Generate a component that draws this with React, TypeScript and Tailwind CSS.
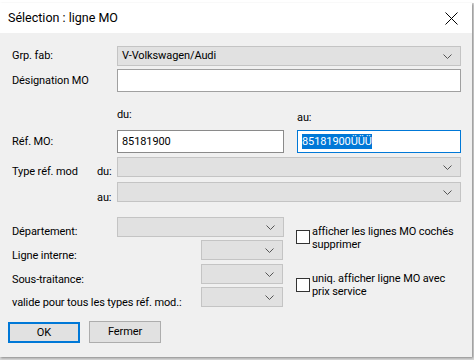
import React from "react";

const font = { fontFamily: 'Roboto, "Liberation Sans", sans-serif' };

function Chevron() {
  return (
    <svg width="9" height="5" viewBox="0 0 9 5" className="shrink-0">
      <path d="M0.5 0.5L4.5 4.5L8.5 0.5" fill="none" stroke="#555" strokeWidth="1" />
    </svg>
  );
}

function Select({ className, text }: { className: string; text?: string }) {
  return (
    <div
      className={
        "flex items-center justify-between border border-[#c4c4c4] bg-[#e1e1e1] pl-[4px] pr-[8px] text-black " +
        className
      }
    >
      <span>{text}</span>
      <Chevron />
    </div>
  );
}

function Checkbox({ className }: { className: string }) {
  return <div className={"h-[14px] w-[14px] shrink-0 border border-[#333] bg-white " + className} />;
}

export default function App() {
  return (
    <div
      className="h-[360px] w-[474px] overflow-hidden whitespace-nowrap bg-[#d6d6d6] text-[11px] leading-[16px] tracking-[-0.1px] text-black"
      style={font}
    >
      <div className="h-[3px] bg-white" />
      <div className="h-[354px] w-[472px] bg-[#f0f0f0] shadow-[1px_1px_2px_rgba(0,0,0,0.35)]">
        <div className="flex h-[30px] items-center justify-between bg-white pl-[8px] pr-[14px]">
          <span className="text-[12.5px] tracking-normal">Sélection : ligne MO</span>
          <svg width="13" height="13" viewBox="0 0 13 13">
            <path d="M0.5 0.5L12.5 12.5M12.5 0.5L0.5 12.5" stroke="#000" strokeWidth="1" />
          </svg>
        </div>

        <div className="pl-[12px] pr-[11px]">
          <div className="mt-[13px] flex h-[20px] items-center">
            <span className="w-[105px]">Grp. fab:</span>
            <Select className="h-[20px] flex-1" text="V-Volkswagen/Audi" />
          </div>

          <div className="mt-[3px] flex h-[23px] items-center">
            <span className="w-[105px]">Désignation MO</span>
            <div className="h-[23px] flex-1 border border-[#a0a0a0] bg-white" />
          </div>

          <div className="flex h-[38px] items-start pl-[105px]">
            <span className="mt-[15px] w-[180px]">du:</span>
            <span className="mt-[18px]">au:</span>
          </div>

          <div className="flex h-[23px] items-center">
            <span className="w-[105px]">Réf. MO:</span>
            <div className="flex h-[23px] w-[167px] items-center border border-[#8a8a8a] bg-white pl-[4px]">
              85181900
            </div>
            <div className="ml-[13px] flex h-[23px] flex-1 items-center border border-[#0078d7] bg-white pl-[4px]">
              <span className="bg-[#0078d7] leading-[15px] text-white">85181900ÜÜÜ</span>
            </div>
          </div>

          <div className="mt-[4px] flex h-[20px] items-start">
            <span className="mt-[7px] w-[85px]">Type réf. mod</span>
            <span className="mt-[7px] w-[20px]">du:</span>
            <Select className="h-[20px] flex-1" />
          </div>

          <div className="mt-[5px] flex h-[20px] items-start">
            <span className="w-[85px]" />
            <span className="mt-[8px] w-[20px]">au:</span>
            <Select className="h-[20px] flex-1" />
          </div>

          <div className="mt-[15px] flex">
            <div className="w-[273px]">
              <div className="flex h-[20px] items-start">
                <span className="mt-[7px] w-[105px]">Département:</span>
                <Select className="h-[20px] w-[167px]" />
              </div>
              <div className="mt-[3px] flex h-[20px] items-start">
                <span className="mt-[8px] w-[189px]">Ligne interne:</span>
                <Select className="h-[20px] w-[82px]" />
              </div>
              <div className="mt-[4px] flex h-[20px] items-start">
                <span className="mt-[8px] w-[189px]">Sous-traitance:</span>
                <Select className="h-[20px] w-[82px]" />
              </div>
              <div className="mt-[3px] flex h-[20px] items-start">
                <span className="mt-[8px] w-[189px]">valide pour tous les types réf. mod.:</span>
                <Select className="h-[20px] w-[82px]" />
              </div>
            </div>

            <div className="ml-[11px] flex-1 pt-[8px]">
              <div className="flex items-start gap-[2px] leading-[13px]">
                <Checkbox className="mt-[5px]" />
                <span>
                  afficher les lignes MO cochés
                  <br />
                  supprimer
                </span>
              </div>
              <div className="mt-[21px] flex items-start gap-[2px] leading-[13px]">
                <Checkbox className="mt-[6px]" />
                <span>
                  uniq. afficher ligne MO avec
                  <br />
                  prix service
                </span>
              </div>
            </div>
          </div>
        </div>

        <div className="mt-[14px] flex items-start gap-[9px] pl-[8px]">
          <div className="mt-[1px] flex h-[21px] w-[72px] items-center justify-center border-2 border-[#0078d7] bg-[#e1e1e1]">
            OK
          </div>
          <div className="flex h-[22px] w-[72px] items-center justify-center border border-[#adadad] bg-[#e1e1e1]">
            Fermer
          </div>
        </div>
      </div>
    </div>
  );
}
